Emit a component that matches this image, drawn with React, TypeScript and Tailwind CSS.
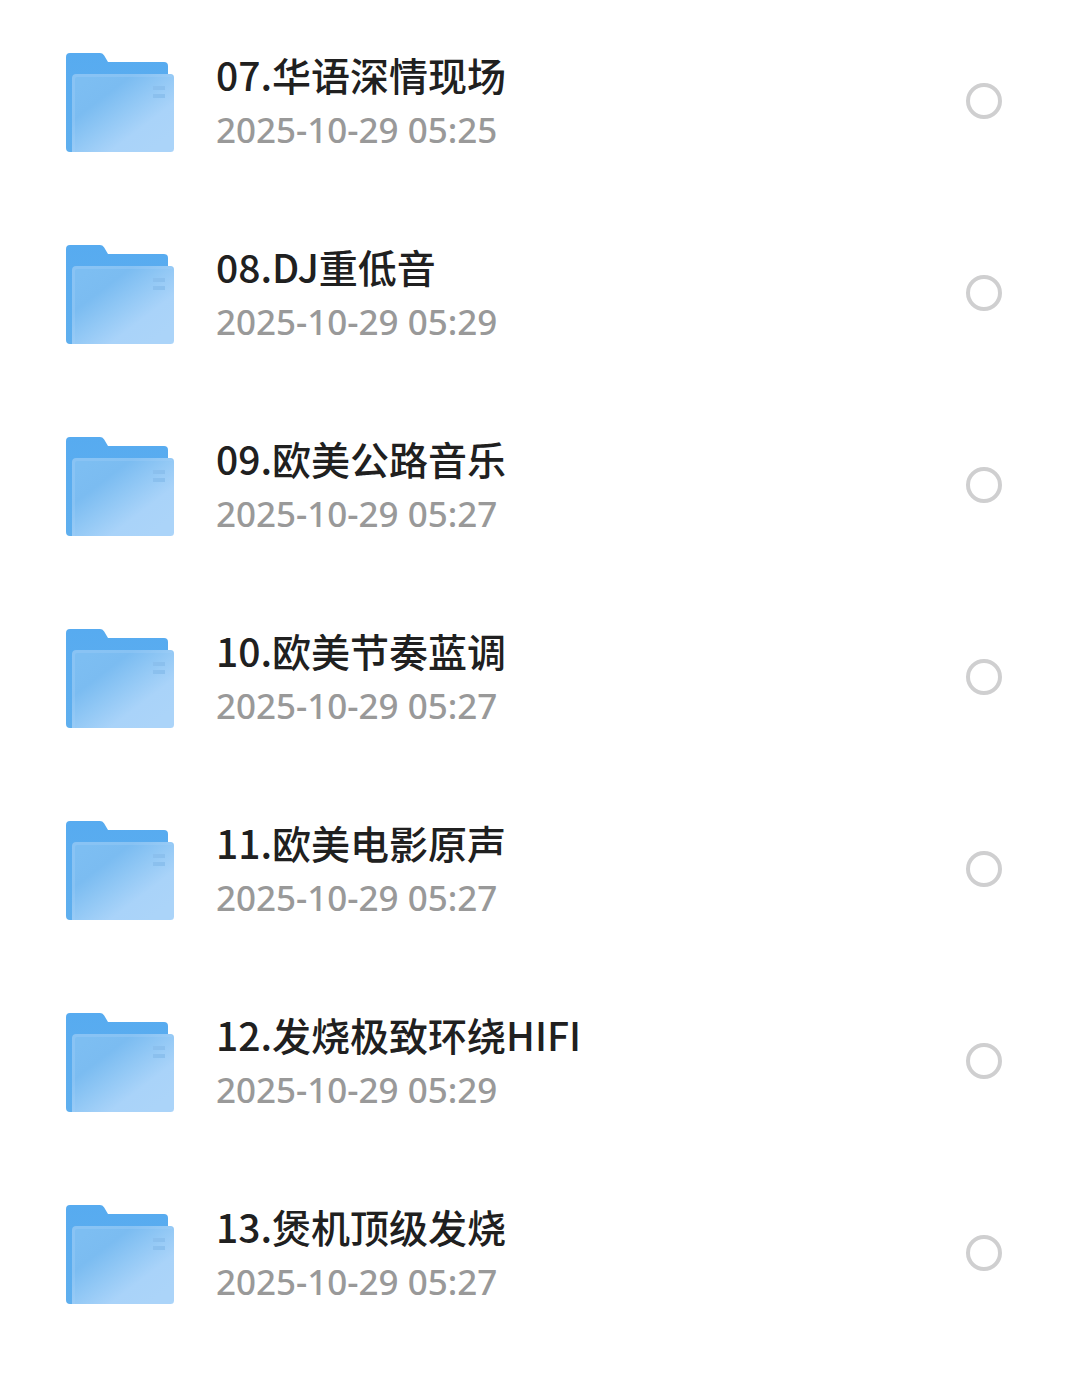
import React, { useState } from "react";

const folders = [
  { name: "07.华语深情现场", date: "2025-10-29 05:25" },
  { name: "08.DJ重低音", date: "2025-10-29 05:29" },
  { name: "09.欧美公路音乐", date: "2025-10-29 05:27" },
  { name: "10.欧美节奏蓝调", date: "2025-10-29 05:27" },
  { name: "11.欧美电影原声", date: "2025-10-29 05:27" },
  { name: "12.发烧极致环绕HIFI", date: "2025-10-29 05:29" },
  { name: "13.煲机顶级发烧", date: "2025-10-29 05:27" },
];

const FolderIcon = () => (
  <svg viewBox="0 -3 108 102" className="w-[108px] h-[102px] shrink-0" aria-hidden="true">
    <path
      d="M4 0H34Q36.5 0 38 2.2L42 9H98Q102 9 102 13V60H12V99H4Q0 99 0 95V4Q0 0 4 0Z"
      fill="url(#folderBack)"
    />
    <path d="M10 21H104.5Q108 21 108 24.5V95.5Q108 99 104.5 99H6V25Q6 21 10 21Z" fill="url(#folderFront)" />
    <path d="M7.5 99V26Q7.5 22.5 11 22.5H106" fill="none" stroke="#a6d2f8" strokeOpacity="0.3" strokeWidth="3" />
    <rect x="87" y="33" width="12" height="4" fill="#8bc0ee" />
    <rect x="87" y="41" width="12" height="4" fill="#8bc0ee" />
  </svg>
);

const FolderRow = ({ folder, checked, onToggle }: any) => (
  <li>
    <label className="flex items-center h-48 pl-[66px] pr-[78px] cursor-pointer">
      <FolderIcon />
      <span className="flex flex-col flex-1 min-w-0 ml-[42px]">
        <span className="text-[39px] leading-[58px] font-medium text-[#202020] truncate">{folder.name}</span>
        <span className="text-[35px] leading-[54px] font-medium text-[#999999] font-['Noto_Sans','Noto_Sans_CJK_SC',sans-serif] truncate">
          {folder.date}
        </span>
      </span>
      <input
        type="checkbox"
        checked={checked}
        onChange={onToggle}
        className="appearance-none w-9 h-9 shrink-0 rounded-full border-4 border-[#cfcfd0] checked:border-[#57abf0] checked:bg-[#57abf0]"
      />
    </label>
  </li>
);

const App = () => {
  const [selected, setSelected] = useState<string[]>([]);

  const handleToggle = (name: string) => {
    setSelected(selected.includes(name) ? selected.filter((n) => n !== name) : [...selected, name]);
  };

  return (
    <main className="min-h-screen bg-white pt-[5px] font-['Noto_Sans_CJK_SC',sans-serif]">
      <svg className="absolute w-0 h-0" aria-hidden="true">
        <defs>
          <linearGradient id="folderBack" x1="0" y1="0" x2="0" y2="1">
            <stop offset="0" stopColor="#57abf0" />
            <stop offset="1" stopColor="#5fafee" />
          </linearGradient>
          <linearGradient id="folderFront" gradientUnits="userSpaceOnUse" x1="24" y1="24" x2="82" y2="100">
            <stop offset="0" stopColor="#7dbef2" />
            <stop offset="0.25" stopColor="#7bbcf1" />
            <stop offset="0.5" stopColor="#92c8f5" />
            <stop offset="0.75" stopColor="#a9d3f9" />
            <stop offset="1" stopColor="#abd4f9" />
          </linearGradient>
        </defs>
      </svg>
      <ul>
        {folders.map((folder) => (
          <FolderRow
            key={folder.name}
            folder={folder}
            checked={selected.includes(folder.name)}
            onToggle={() => handleToggle(folder.name)}
          />
        ))}
      </ul>
    </main>
  );
};

export default App;
